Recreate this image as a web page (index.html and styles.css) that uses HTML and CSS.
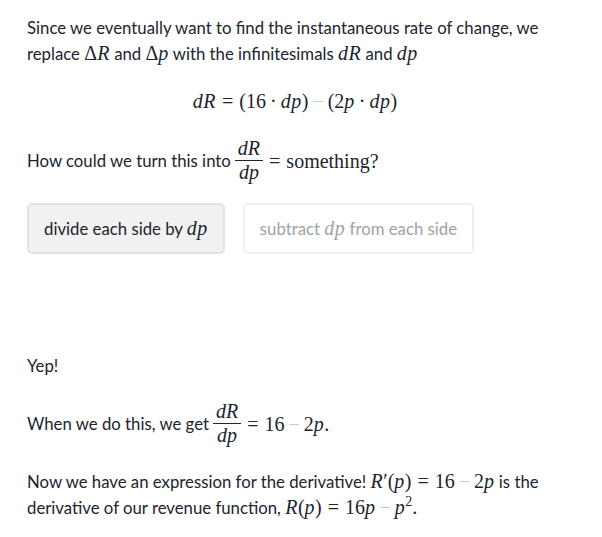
FILE: index.html
```html
<!DOCTYPE html>
<html>
<head>
<meta charset="utf-8">
<link rel="stylesheet" href="styles.css">
</head>
<body>
<main class="page">
  <p class="para">Since we eventually want to find the instantaneous rate of change, we replace <span class="m">Δ<i>R</i></span> and <span class="m">Δ<i>p</i></span> with the infinitesimals <span class="m"><i>dR</i></span> and <span class="m"><i>dp</i></span></p>
  <div class="display"><span class="m"><i>dR</i><span class="rel">=</span>(16<span class="bin">·</span><i>dp</i>)<span class="bin minus">−</span>(2<i>p</i><span class="bin">·</span><i>dp</i>)</span></div>
  <p class="para frac-line">How could we turn this into <span class="frac"><span class="num"><i>dR</i></span><span class="den"><i>dp</i></span></span><span class="m after"><span class="rel">=</span>something?</span></p>
  <div class="choices">
    <button class="choice chosen">divide each side by <span class="m"><i>dp</i></span></button>
    <button class="choice faded">subtract <span class="m"><i>dp</i></span> from each side</button>
  </div>
  <p class="para yep">Yep!</p>
  <p class="para frac-line">When we do this, we get <span class="frac"><span class="num"><i>dR</i></span><span class="den"><i>dp</i></span></span><span class="m after"><span class="rel">=</span>16<span class="bin minus">−</span>2<i>p</i>.</span></p>
  <p class="para">Now we have an expression for the derivative! <span class="m"><i>R</i>′(<i>p</i>)<span class="rel">=</span>16<span class="bin minus">−</span>2<i>p</i></span> is the derivative of our revenue function, <span class="m"><i>R</i>(<i>p</i>)<span class="rel">=</span>16<i>p</i><span class="bin minus">−</span><i>p</i><sup>2</sup>.</span></p>
</main>
</body>
</html>
```
FILE: styles.css
```css
html, body {
  margin: 0;
  padding: 0;
  background: #ffffff;
}
.page {
  width: 530px;
  padding: 15px 27px;
  font-family: Lato, "Open Sans", sans-serif;
  font-size: 16.75px;
  line-height: 26px;
  color: #21242c;
}
.para {
  margin: 0;
}
.m {
  font-family: "Liberation Serif", "DejaVu Serif", serif;
  font-size: 20px;
  line-height: 20px;
  white-space: nowrap;
}
.m i {
  font-style: italic;
  letter-spacing: 0.5px;
}
.m sup {
  font-size: 14px;
  line-height: 0;
}
.rel {
  padding: 0 6px;
}
.bin {
  padding: 0 4px;
}
.minus {
  color: #c8c8c8;
}
.display {
  margin: 20px 0 21px;
  text-align: center;
  line-height: 30px;
  padding-left: 6px;
}
.frac-line {
  display: flex;
  align-items: center;
  gap: 4px;
}
.after .rel:first-child {
  padding-left: 2px;
}
.frac {
  display: inline-flex;
  flex-direction: column;
  align-items: center;
  font-family: "Liberation Serif", "DejaVu Serif", serif;
  font-size: 20px;
  line-height: 21px;
}
.num {
  border-bottom: 1px solid #21242c;
  padding: 0 3px 1px;
}
.den {
  padding: 1px 3px 0;
}
.choices {
  display: flex;
  gap: 18px;
  margin: 20px 0 0;
}
.choice {
  font-family: Lato, "Open Sans", sans-serif;
  font-size: 16.75px;
  height: 51px;
  padding: 0 15px;
  border-radius: 5px;
  background: #ffffff;
  border: 2px solid #eeeeef;
  color: #a0a2a6;
}
.chosen {
  background: #f1f1f2;
  border-color: #e2e2e3;
  color: #21242c;
}
.yep {
  margin-top: 99px;
  margin-bottom: 22px;
}
.frac-line + .para {
  margin-top: 23px;
}
```
